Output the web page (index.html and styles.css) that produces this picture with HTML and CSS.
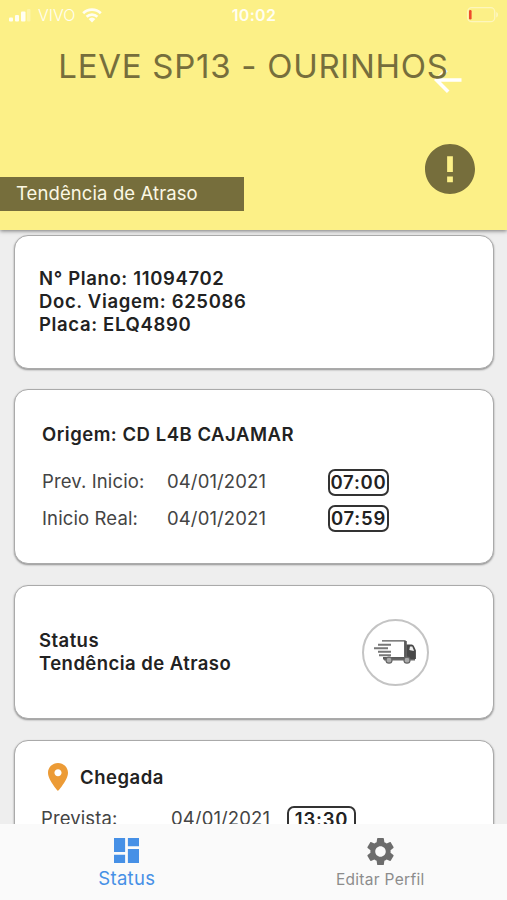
FILE: index.html
```html
<!DOCTYPE html>
<html lang="pt-BR">
<head>
  <meta charset="UTF-8">
  <meta name="viewport" content="width=device-width, initial-scale=1.0">
  <title>Status da Viagem</title>
  <link rel="stylesheet" href="styles.css">
</head>
<body>
  <div class="app">
    <header class="header">
      <div class="status-bar">
        <div class="carrier">
          <svg class="signal" width="22" height="13" viewBox="0 0 22 13" fill="#fffef2">
            <rect x="0" y="8.5" width="4" height="4" rx="1"/>
            <rect x="6" y="6" width="4" height="6.5" rx="1"/>
            <rect x="12" y="2.5" width="4.5" height="10" rx="1"/>
            <rect x="18" y="0" width="3.5" height="12.5" rx="1" opacity="0.3"/>
          </svg>
          <span class="carrier-name">VIVO</span>
          <svg class="wifi" width="20" height="15" viewBox="0 0 20 15">
            <path d="M1.2 5.2a12.6 12.6 0 0 1 17.6 0M4.6 8.8a7.8 7.8 0 0 1 10.8 0" fill="none" stroke="#fffef2" stroke-width="2.7"/>
            <path d="M10 14.5 6.6 11a5 5 0 0 1 6.8 0z" fill="#fffef2"/>
          </svg>
        </div>
        <div class="clock">10:02</div>
        <svg class="battery" width="32" height="16" viewBox="0 0 32 16">
          <rect x="0.7" y="0.7" width="27" height="14" rx="4" fill="none" stroke="#fdf6bd" stroke-width="1.3"/>
          <path d="M29.2 5v5.5c2.4-.6 2.4-4.9 0-5.5z" fill="#fdf6bd"/>
          <rect x="2" y="3" width="2.6" height="9.5" rx="1.2" fill="#ee4b2b"/>
        </svg>
      </div>
      <div class="title-row">
        <h1>LEVE SP13 - OURINHOS</h1>
        <svg class="back" width="28" height="28" viewBox="0 0 28 28" fill="none" stroke="#fff" stroke-width="3.6">
          <path d="M27.5 14H3.5M12.5 4 2.5 14 14.200 25.7"/>
        </svg>
      </div>
      <div class="header-bottom">
        <div class="tag">Tendência de Atraso</div>
        <svg class="alert" width="50" height="50" viewBox="2 2 20 20">
          <path fill="#766e3c" d="M12 2C6.48 2 2 6.48 2 12s4.48 10 10 10 10-4.48 10-10S17.52 2 12 2zm1.15 15.3h-2.3v-2.3h2.3v2.3zm0-4.1h-2.3V6.9h2.3v6.3z"/>
        </svg>
      </div>
    </header>

    <main class="content">
      <section class="card card-plan">
        <p>N° Plano: 11094702</p>
        <p>Doc. Viagem: 625086</p>
        <p>Placa: ELQ4890</p>
      </section>

      <section class="card card-origin">
        <h2>Origem: CD L4B CAJAMAR</h2>
        <div class="row">
          <span class="label">Prev. Inicio:</span>
          <span class="date">04/01/2021</span>
          <span class="time">07:00</span>
        </div>
        <div class="row">
          <span class="label">Inicio Real:</span>
          <span class="date">04/01/2021</span>
          <span class="time">07:59</span>
        </div>
      </section>

      <section class="card card-status">
        <div>
          <p>Status</p>
          <p>Tendência de Atraso</p>
        </div>
        <div class="truck">
          <svg width="44" height="26" viewBox="0 0 44 26">
            <path d="M8 1.8h23v17.5H12" fill="none" stroke="#555" stroke-width="1.3"/>
            <path d="M31.5 2v18M9 19.2h23" stroke="#5a5a5a" stroke-width="2.6" fill="none"/>
            <path d="M10 20.5h31" stroke="#666" stroke-width="2"/>
            <path d="M32.5 5.5h5.2q1.5 0 2.2 1.5l2 4.5v8.5h-9.4z" fill="#484848"/>
            <path d="M36 7.5h2.3l1.8 4.5-4.8-1z" fill="#eee"/>
            <path d="M4 5.7h13M0 9.2h14M4 12.8h13M5 16.2h12" stroke="#777" stroke-width="2"/>
            <circle cx="15" cy="21.2" r="3" fill="#aaa" stroke="#666" stroke-width="1.2"/>
            <circle cx="33" cy="21.2" r="3" fill="#aaa" stroke="#666" stroke-width="1.2"/>
          </svg>
        </div>
      </section>

      <section class="card card-arrival">
        <div class="arrival-title">
          <svg width="20" height="28" viewBox="5 2 14 20" preserveAspectRatio="none">
            <path fill="#ec9b36" d="M12 2C8.13 2 5 5.13 5 9c0 5.25 7 13 7 13s7-7.75 7-13c0-3.87-3.13-7-7-7zm0 9.5c-1.38 0-2.5-1.12-2.5-2.5s1.12-2.5 2.5-2.5 2.5 1.12 2.5 2.5-1.12 2.5-2.5 2.5z"/>
          </svg>
          <h2>Chegada</h2>
        </div>
        <div class="row">
          <span class="label">Prevista:</span>
          <span class="date">04/01/2021</span>
          <span class="time">13:30</span>
        </div>
      </section>
    </main>

    <nav class="tabs">
      <a class="tab active">
        <svg width="25" height="25" viewBox="3 3 18 18" fill="currentColor">
          <path d="M3 13h8V3H3v10zm0 8h8v-6H3v6zm10 0h8V11h-8v10zm0-18v6h8V3h-8z"/>
        </svg>
        <span>Status</span>
      </a>
      <a class="tab">
        <svg width="27" height="27" viewBox="2 2 20 20" fill="#6c6c6c">
          <path d="M19.43 12.98c.04-.32.07-.64.07-.98s-.03-.66-.07-.98l2.11-1.65c.19-.15.24-.42.12-.64l-2-3.46c-.12-.22-.39-.3-.61-.22l-2.49 1c-.52-.4-1.08-.73-1.69-.98l-.38-2.65C14.46 2.18 14.25 2 14 2h-4c-.25 0-.46.18-.49.42l-.38 2.65c-.61.25-1.17.59-1.69.98l-2.49-1c-.23-.09-.49 0-.61.22l-2 3.46c-.13.22-.07.49.12.64l2.11 1.65c-.04.32-.07.65-.07.98s.03.66.07.98l-2.11 1.65c-.19.15-.24.42-.12.64l2 3.46c.12.22.39.3.61.22l2.49-1c.52.4 1.08.73 1.69.98l.38 2.65c.03.24.24.42.49.42h4c.25 0 .46-.18.49-.42l.38-2.65c.61-.25 1.17-.59 1.69-.98l2.49 1c.23.09.49 0 .61-.22l2-3.46c.12-.22.07-.49-.12-.64l-2.11-1.65zM12 15.9c-2.15 0-3.9-1.75-3.9-3.9s1.75-3.9 3.9-3.9 3.9 1.75 3.9 3.9-1.75 3.9-3.9 3.9z"/>
        </svg>
        <span>Editar Perfil</span>
      </a>
    </nav>
  </div>
</body>
</html>
```

FILE: styles.css
```css
* {
  box-sizing: border-box;
}
body {
  margin: 0;
  font-family: Inter, sans-serif;
  font-size: 18.5px;
  color: #222;
  background-color: #eeeeee;
}
h1, h2, p {
  margin: 0;
}
svg {
  display: block;
  flex-shrink: 0;
}
.app {
  display: flex;
  flex-direction: column;
  height: 100vh;
  overflow: hidden;
}
.header {
  height: 230px;
  flex-shrink: 0;
  background-color: #fcf087;
  box-shadow: 0 1px 4px rgba(0, 0, 0, 0.5);
}
.status-bar {
  display: grid;
  grid-template-columns: 1fr auto 1fr;
  align-items: center;
  height: 30px;
  padding: 0 8px 0 9px;
  color: #fffef2;
}
.carrier {
  display: flex;
  align-items: center;
}
.carrier-name {
  margin: 0 7px 0 7px;
  font-size: 16px;
  font-weight: 300;
}
.clock {
  font-size: 16px;
  font-weight: 600;
  letter-spacing: 0.3px;
}
.battery {
  justify-self: end;
}
.title-row {
  position: relative;
  height: 114px;
  padding-top: 16px;
}
h1 {
  position: relative;
  z-index: 1;
  font-size: 33px;
  font-weight: 400;
  line-height: 40px;
  letter-spacing: 0.72px;
  text-align: center;
  white-space: nowrap;
  color: #766e3c;
}
/* the arrow sits partly under the title */
.back {
  position: absolute;
  top: 36px;
  left: 434px;
}
.header-bottom {
  display: flex;
  justify-content: space-between;
  padding-right: 32px;
}
.tag {
  width: 244px;
  height: 34px;
  margin-top: 33px;
  padding-left: 16px;
  line-height: 32px;
  letter-spacing: 0.1px;
  color: #fcf8e4;
  background-color: #766e3c;
}
.content {
  flex: 1;
  min-height: 0;
  overflow: hidden;
  padding: 5px 13px 0 14px;
}
.card {
  margin-bottom: 21px;
  background-color: #fff;
  border: 1.5px solid #aaa;
  border-radius: 14px;
  box-shadow: 0 1px 2px rgba(0, 0, 0, 0.4);
}
.card p {
  font-weight: 600;
  line-height: 23px;
  letter-spacing: 0.45px;
}
h2 {
  font-size: 18.5px;
  font-weight: 600;
  line-height: 24px;
  letter-spacing: 0.52px;
}
.card-plan {
  height: 134px;
  margin-bottom: 20px;
  padding: 31px 24px;
}
.card-plan p {
  letter-spacing: 0.65px;
}
.card-origin {
  height: 175px;
  padding: 32px 27px;
}
.card-origin h2 {
  margin-bottom: 18px;
}
.row {
  display: flex;
  align-items: center;
  height: 36.5px;
  color: #444;
  letter-spacing: 0.12px;
}
.label, .date {
  line-height: 24px;
  padding-bottom: 2px;
}
.label {
  width: 125px;
}
.date {
  width: 161px;
}
.time {
  width: 61px;
  height: 27px;
  border: 2px solid #333;
  border-radius: 7px;
  font-weight: 600;
  line-height: 23px;
  letter-spacing: 0.8px;
  text-align: center;
  white-space: nowrap;
  color: #222;
}
.card-status {
  display: flex;
  justify-content: space-between;
  align-items: center;
  height: 134px;
  padding: 0 64px 0 24px;
}
.truck {
  display: flex;
  justify-content: center;
  align-items: center;
  width: 67px;
  height: 67px;
  border: 2px solid #c4c4c4;
  border-radius: 50%;
}
.card-arrival {
  height: 175px;
  padding: 21px 26px;
}
.arrival-title {
  display: flex;
  align-items: center;
  gap: 12px;
  height: 30px;
  margin-bottom: 9px;
  padding-left: 7px;
}
.card-arrival .label {
  width: 130px;
}
.card-arrival .date {
  width: 116px;
}
.card-arrival .time {
  width: 69px;
}
.tabs {
  position: relative;
  display: flex;
  flex-shrink: 0;
  height: 76px;
  background-color: #fafafa;
}
.tab {
  flex: 1;
  display: flex;
  flex-direction: column;
  align-items: center;
  padding-top: 14px;
  font-size: 15.5px;
  letter-spacing: 0.3px;
  color: #8c8c8c;
}
.tab span {
  margin-top: 5px;
}
.tab.active {
  font-size: 18.5px;
  color: #4690e6;
}
.tab.active span {
  margin-top: 4px;
}
```
